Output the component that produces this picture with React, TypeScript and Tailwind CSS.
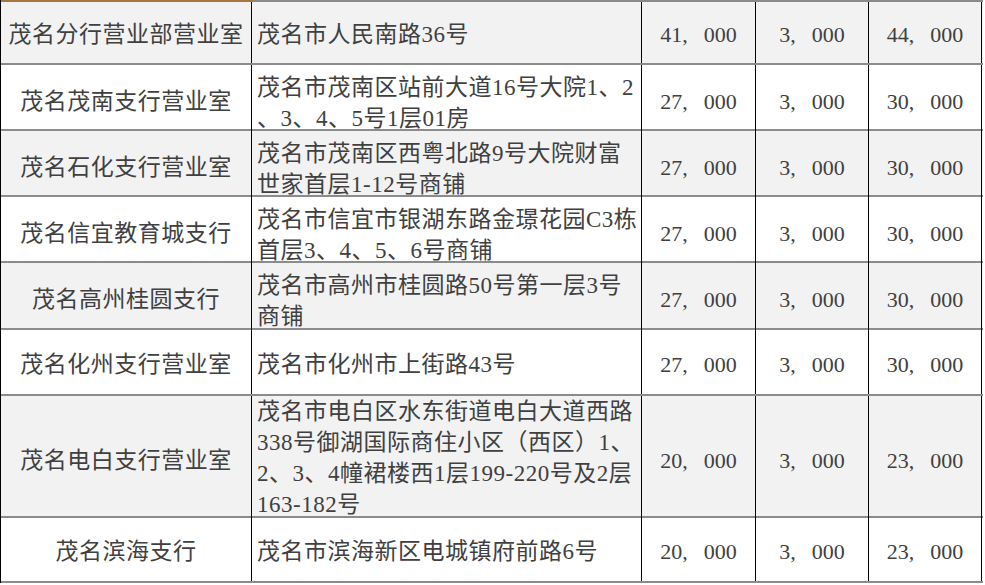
import React from "react";

interface Branch {
  name: string;
  address: string[]; // lines as they break in the document
  rent: string;
  extra: string;
  total: string;
  h: string; // row height class, bottom border included
}

const rows: Branch[] = [
  { name: "茂名分行营业部营业室", address: ["茂名市人民南路36号"], rent: "41,000", extra: "3,000", total: "44,000", h: "h-[63px]" },
  { name: "茂名茂南支行营业室", address: ["茂名市茂南区站前大道16号大院1、2", "、3、4、5号1层01房"], rent: "27,000", extra: "3,000", total: "30,000", h: "h-[66px]" },
  { name: "茂名石化支行营业室", address: ["茂名市茂南区西粤北路9号大院财富", "世家首层1-12号商铺"], rent: "27,000", extra: "3,000", total: "30,000", h: "h-[66px]" },
  { name: "茂名信宜教育城支行", address: ["茂名市信宜市银湖东路金璟花园C3栋", "首层3、4、5、6号商铺"], rent: "27,000", extra: "3,000", total: "30,000", h: "h-[66px]" },
  { name: "茂名高州桂圆支行", address: ["茂名市高州市桂圆路50号第一层3号", "商铺"], rent: "27,000", extra: "3,000", total: "30,000", h: "h-[67px]" },
  { name: "茂名化州支行营业室", address: ["茂名市化州市上街路43号"], rent: "27,000", extra: "3,000", total: "30,000", h: "h-[66px]" },
  {
    name: "茂名电白支行营业室",
    address: ["茂名市电白区水东街道电白大道西路", "338号御湖国际商住小区（西区）1、", "2、3、4幢裙楼西1层199-220号及2层", "163-182号"],
    rent: "20,000",
    extra: "3,000",
    total: "23,000",
    h: "h-[122px]",
  },
  { name: "茂名滨海支行", address: ["茂名市滨海新区电城镇府前路6号"], rent: "20,000", extra: "3,000", total: "23,000", h: "h-[65px]" },
];

const cell = "flex items-center border-r-[1.5px] border-black";

// the document's comma is set wide, like a full-width one
function Amount({ value }: { value: string }) {
  const [a, b] = value.split(",");
  return (
    <span className="text-[22px] tracking-normal">
      {a}
      <span className="mr-[16px]">,</span>
      {b}
    </span>
  );
}

export default function App() {
  return (
    <div className="w-[985px] h-[585px] bg-white overflow-hidden">
      <div
        className="w-[983px] border-l-[1.5px] border-black text-[#404040] text-[23px] tracking-[0.5px] leading-[31px]"
        style={{ fontFamily: '"Liberation Serif", "Noto Sans CJK SC", serif' }}
      >
        {/* bottom edge of the header row, cut off above */}
        <div className="flex h-[2px]">
          <div className="w-[252px] bg-[#a8763f]" />
          <div className="flex-1 bg-[#8a8a8a]" />
        </div>
        {rows.map((r, i) => (
          <div
            key={r.name}
            className={`grid grid-cols-[251px_390px_114px_113px_113px] border-b-2 border-[#8c8c8c] ${r.h} ${
              i % 2 === 0 ? "bg-[#f2f2f2]" : "bg-white"
            }`}
          >
            <div className={`${cell} justify-center whitespace-nowrap pt-[4px]`}>{r.name}</div>
            <div className={`${cell} px-[5px] ${r.address.length === 2 ? "pt-[7px]" : r.address.length === 1 ? "pt-[4px]" : ""}`}>
              <div className="whitespace-nowrap">
                {r.address.map((line) => (
                  <div key={line}>{line}</div>
                ))}
              </div>
            </div>
            <div className={`${cell} justify-center pt-[4px]`}>
              <Amount value={r.rent} />
            </div>
            <div className={`${cell} justify-center pt-[4px]`}>
              <Amount value={r.extra} />
            </div>
            <div className={`${cell} justify-center pt-[4px]`}>
              <Amount value={r.total} />
            </div>
          </div>
        ))}
      </div>
    </div>
  );
}
